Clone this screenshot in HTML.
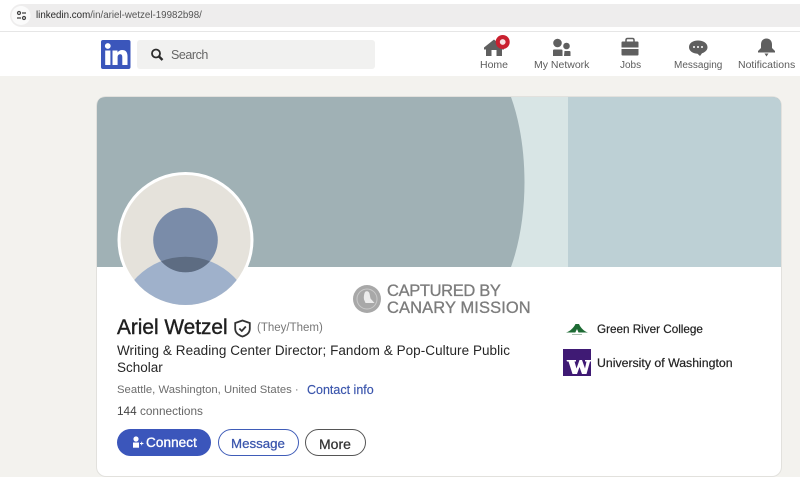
<!DOCTYPE html>
<html><head><meta charset="utf-8">
<style>
html,body{margin:0;padding:0;width:800px;height:477px;overflow:hidden;background:#f3f2ee;font-family:"Liberation Sans",sans-serif}
.t{position:absolute;white-space:nowrap;line-height:1}
.a{position:absolute}
svg{position:absolute;left:0;top:0}
</style></head><body>
<div class="a" style="left:0;top:0;width:800px;height:32px;background:#fff"></div>
<div class="a" style="left:10px;top:4px;width:790px;height:23px;background:#eeeded;border-radius:12px 0 0 12px"></div>
<div class="a" style="left:0;top:31px;width:800px;height:1px;background:#e6e6e6"></div>
<div class="a" style="left:0;top:32px;width:800px;height:44px;background:#fff"></div>
<div class="a" style="left:137px;top:40px;width:238px;height:29px;background:#f1f1f0;border-radius:3px"></div>
<div class="a" style="left:97px;top:97px;width:684px;height:379px;background:#fff;border-radius:9px;box-shadow:0 0 0 1px #e2e1dd"></div>

<svg width="800" height="477" viewBox="0 0 800 477">
<!-- url icon -->
<circle cx="21" cy="15.500" r="9.500" fill="#fbfbfb"/>
<g stroke="#444" stroke-width="1.200" fill="none"><circle cx="19" cy="13" r="1.500"/><path d="M22 13h4M17 18h4"/><circle cx="24" cy="18" r="1.500"/></g>
<!-- logo -->
<rect x="101" y="40" width="29.500" height="29" rx="2" fill="#3b56bb"/>
<circle cx="107.800" cy="46" r="2.900" fill="#fff"/>
<rect x="105.200" y="50.500" width="5.200" height="14.500" fill="#fff"/>
<path d="M112.500 50.500h5v2c1-1.500 2.700-2.500 4.600-2.500 3.700 0 5.400 2.300 5.400 6.200v8.800h-5.200v-7.800c0-2-.6-3-2.100-3-1.800 0-2.600 1.200-2.600 3.100v7.700h-5.100z" fill="#fff"/>
<!-- search -->
<circle cx="156" cy="53.500" r="4" fill="none" stroke="#2b2b2b" stroke-width="1.800"/>
<path d="M159 56.500l3.500 3.500" stroke="#2b2b2b" stroke-width="2.400"/>
<!-- home -->
<path d="M484 47.500l10-8 10 8v2h-2V56h-5.500v-6h-5v6H486v-6.500h-2z" fill="#5f5f5f"/>
<circle cx="502.700" cy="42" r="7" fill="#c9202f"/><circle cx="502.700" cy="42" r="2.900" fill="#f6e3e4"/>
<!-- network -->
<circle cx="557.500" cy="43" r="4.300" fill="#5f5f5f"/>
<circle cx="566.500" cy="46" r="3.300" fill="#5f5f5f"/>
<path d="M554 49.500h7.500q1 0 1 1V56h-9.500v-5.500q0-1 1-1z" fill="#5f5f5f"/>
<path d="M564.500 51h5q1 0 1 1v4h-6.500z" fill="#5f5f5f"/>
<!-- jobs -->
<path d="M621.500 42.500q0-1 1-1h15q1 0 1 1v5h-17z" fill="#5f5f5f"/>
<path d="M621.500 49h17v5.500q0 1-1 1h-15q-1 0-1-1z" fill="#5f5f5f"/>
<path d="M626 41.500v-1.500q0-1.500 1.500-1.500h5q1.500 0 1.500 1.500v1.500" fill="none" stroke="#5f5f5f" stroke-width="1.500"/>
<!-- messaging -->
<path d="M698 40.500c5.500 0 9.500 2.800 9.500 6.700 0 2.800-2.300 5-5.500 6l-2 2.800-2.500-2.300c-5 -.3-8.500-3-8.500-6.500 0-3.900 3.500-6.700 9-6.700z" fill="#5f5f5f"/>
<circle cx="694" cy="47" r="1" fill="#fff"/><circle cx="698" cy="47" r="1" fill="#fff"/><circle cx="702" cy="47" r="1" fill="#fff"/>
<!-- bell -->
<path d="M766.500 38.500c3.500 0 5.500 2.500 5.500 6v3.500l3 3v1.500h-17V51l3-3v-3.500c0-3.500 2-6 5.500-6z" fill="#5f5f5f"/>
<path d="M764.500 53.500h4l-2 3z" fill="#5f5f5f"/>
<!-- banner -->
<clipPath id="b"><path d="M97 267V106q0-9 9-9H772q9 0 9 9V267z"/></clipPath>
<g clip-path="url(#b)">
<rect x="97" y="97" width="684" height="170" fill="#a0b1b5"/>
<path d="M511 97h57v170h-57c9-25 13.500-55 13.500-85s-4.500-60-13.500-85z" fill="#d8e5e5"/>
<rect x="568" y="97" width="213" height="170" fill="#bdd0d5"/>
</g>
<!-- avatar -->
<clipPath id="av"><circle cx="185.500" cy="240" r="65"/></clipPath>
<clipPath id="hd"><circle cx="185.500" cy="240" r="32.300"/></clipPath>
<circle cx="185.500" cy="240" r="68" fill="#fff"/>
<g clip-path="url(#av)">
<rect x="115" y="170" width="140" height="140" fill="#e5e2db"/>
<circle cx="185.500" cy="325" r="68.300" fill="#9fb1cb"/>
<circle cx="185.500" cy="240" r="32.300" fill="#7a8ca9"/>
<circle cx="185.500" cy="325" r="68.300" fill="#5d6c82" clip-path="url(#hd)"/>
</g>
<!-- canary -->
<circle cx="367" cy="299" r="14" fill="#a8a8a8"/>
<circle cx="367" cy="299" r="10" fill="none" stroke="#c9c9c9" stroke-width="1"/>
<path d="M365 292c2-1.500 4-.5 4.500 1.500l1 5 4 4.500h-9l-1.500-3.500c-.5-2.500 0-5.500 1-7.500z" fill="#ececec"/>
<!-- badge -->
<path d="M242.500 320.500l7.300 2.500v5.500c0 4-3 6.700-7.300 8-4.300-1.300-7.300-4-7.300-8V323z" fill="none" stroke="#333" stroke-width="1.800"/>
<path d="M239.300 328.500l2.500 2.500 4-4.500" fill="none" stroke="#333" stroke-width="1.800"/>
<!-- green river -->
<path d="M566 332.500c4-1.200 7.500-4.500 9.500-8.500h3.500c1.800 4 5 7.300 9 8.500h-9.500l-1.500-3.500-1.700 3.500z" fill="#1e6b34"/>
<rect x="572" y="334" width="10" height="1" fill="#a9bfae"/>
<!-- UW -->
<rect x="563" y="349" width="28" height="27" fill="#3f1a74"/>
<path d="M566.500 360h9.500v1.500h-1.500l2 7 3-8.500h2.500l3 8.500 1.500-7h-1.500V360h6v1.500h-1l-3.500 12.500h-4.500l-2.500-7-2.500 7h-4.500l-4-12.500h-1.500z" fill="#fff"/>
</svg>

<div class="t" style="left:36px;top:10.500px;font-size:9.750px;color:#2a2a2a">linkedin.com<span style="color:#555">/in/ariel-wetzel-19982b98/</span></div>
<div class="t" style="left:171px;top:48.500px;font-size:12.500px;color:#666;letter-spacing:-.45px">Search</div>

<div class="t" style="left:480px;top:60px;font-size:10.500px;color:#5c5c5c">Home</div>
<div class="t" style="left:534px;top:60px;font-size:10.500px;color:#5c5c5c">My Network</div>
<div class="t" style="left:620px;top:60.500px;font-size:10px;color:#5c5c5c">Jobs</div>
<div class="t" style="left:674px;top:60.500px;font-size:10px;color:#5c5c5c">Messaging</div>
<div class="t" style="left:738px;top:60px;font-size:10.500px;color:#5c5c5c">Notifications</div>

<div class="t" style="left:387px;top:282.500px;font-size:16.500px;color:#7c7c7c;letter-spacing:-.35px;-webkit-text-stroke:.3px #7c7c7c">CAPTURED BY</div>
<div class="t" style="left:387px;top:299.500px;font-size:16.500px;color:#7c7c7c;letter-spacing:.1px;-webkit-text-stroke:.3px #7c7c7c">CANARY MISSION</div>

<div class="t" style="left:117px;top:318px;font-size:20.800px;color:#1f1f1f;-webkit-text-stroke:.4px #1f1f1f">Ariel Wetzel</div>
<div class="t" style="left:257px;top:322.500px;font-size:11.500px;color:#777">(They/Them)</div>
<div class="t" style="left:117px;top:344px;font-size:13.500px;color:#262626;letter-spacing:.05px">Writing &amp; Reading Center Director; Fandom &amp; Pop-Culture Public</div>
<div class="t" style="left:117px;top:361px;font-size:13.500px;color:#262626">Scholar</div>
<div class="t" style="left:117px;top:384.500px;font-size:11.300px;color:#6d6d6d">Seattle, Washington, United States ·</div>
<div class="t" style="left:307px;top:384px;font-size:12.500px;color:#3a55ac;-webkit-text-stroke:.15px #3a55ac">Contact info</div>
<div class="t" style="left:117px;top:406px;font-size:11.800px;color:#666"><span style="color:#444">144</span> connections</div>

<div class="t" style="left:597px;top:323.500px;font-size:11.700px;color:#222;-webkit-text-stroke:.2px #222">Green River College</div>
<div class="t" style="left:597px;top:357px;font-size:12.300px;color:#222;-webkit-text-stroke:.2px #222">University of Washington</div>

<div class="a" style="left:117px;top:429px;width:94px;height:27px;border-radius:14px;background:#3b56bb"></div>
<div class="t" style="left:146px;top:436px;font-size:13.500px;color:#fff;-webkit-text-stroke:.35px #fff;letter-spacing:.1px">Connect</div>
<div class="a" style="left:218px;top:429px;width:79px;height:25px;border-radius:14px;background:#fff;border:1px solid #3f5cb8"></div>
<div class="t" style="left:231px;top:436.500px;font-size:13.300px;color:#3a55ac;-webkit-text-stroke:.25px #3a55ac">Message</div>
<div class="a" style="left:305px;top:429px;width:59px;height:25px;border-radius:14px;background:#fff;border:1px solid #555"></div>
<div class="t" style="left:319px;top:436.500px;font-size:14px;color:#333;-webkit-text-stroke:.25px #333">More</div>
<svg width="800" height="477" viewBox="0 0 800 477">
<circle cx="136" cy="439" r="2.600" fill="#fff"/>
<path d="M133 442.500h6v5.200h-6z" fill="#fff"/>
<path d="M140 443.500h3.400M141.700 441.800v3.400" stroke="#fff" stroke-width=".9"/>
</svg>
</body></html>
